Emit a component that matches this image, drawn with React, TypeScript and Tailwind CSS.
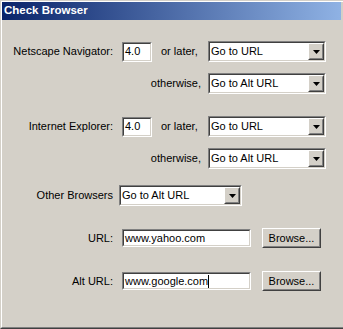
import React from "react";

const font = { fontFamily: '"Liberation Sans", Arial, sans-serif' };

function Sunken({ className = "", children }: { className?: string; children?: React.ReactNode }) {
  return (
    <div className={`border border-t-[#808080] border-l-[#808080] border-b-white border-r-white ${className}`}>
      <div className="w-full h-full border border-t-[#404040] border-l-[#404040] border-b-[#d4d0c8] border-r-[#d4d0c8] bg-white flex items-center">
        {children}
      </div>
    </div>
  );
}

function Raised({ className = "", children }: { className?: string; children?: React.ReactNode }) {
  return (
    <div className={`border border-t-white border-l-white border-b-[#404040] border-r-[#404040] ${className}`}>
      <div className="w-full h-full border border-t-[#d4d0c8] border-l-[#d4d0c8] border-b-[#808080] border-r-[#808080] bg-[#d4d0c8] flex items-center justify-center">
        {children}
      </div>
    </div>
  );
}

function Select({ value, className = "" }: { value: string; className?: string }) {
  return (
    <Sunken className={`h-[21px] ${className}`}>
      <span className="flex-1 pl-[1px] text-[11px] leading-none text-black whitespace-nowrap overflow-hidden">{value}</span>
      <Raised className="w-[16px] h-[17px] shrink-0">
        <svg width="7" height="4" viewBox="0 0 7 4">
          <path d="M0 0H7L3.5 4Z" fill="#000" />
        </svg>
      </Raised>
    </Sunken>
  );
}

function TextBox({ value, className = "", cursor = false }: { value: string; className?: string; cursor?: boolean }) {
  return (
    <Sunken className={className}>
      <span className="pl-[1px] text-[11px] leading-none text-black whitespace-nowrap flex items-center">
        {value}
        {cursor && <span className="inline-block w-[1px] h-[13px] bg-black" />}
      </span>
    </Sunken>
  );
}

function Label({ text, w }: { text: string; w: string }) {
  return <div className={`${w} text-right text-[11px] leading-none text-black whitespace-nowrap shrink-0`}>{text}</div>;
}

export default function App() {
  return (
    <div className="w-[343px] h-[329px] bg-[#d4d0c8] overflow-hidden" style={font}>
      <div className="w-full h-full border-t border-l border-t-[#d4d0c8] border-l-[#d4d0c8] border-b border-b-[#404040]">
        <div className="w-full h-full border-t border-l border-t-white border-l-white border-b border-b-[#808080] flex flex-col">
          <div className="h-[18px] mr-[2px] flex items-center pl-[2px] bg-[linear-gradient(to_right,#0a246a,#8fb2e4)]">
            <span className="text-white font-bold text-[11.5px] leading-none">Check Browser</span>
          </div>

          <div className="flex flex-col">
            <div className="mt-[21px] h-[21px] flex items-center">
              <Label text="Netscape Navigator:" w="w-[111px]" />
              <TextBox value="4.0" className="ml-[9px] w-[30px] h-[20px]" />
              <div className="ml-[9px] w-[47px] text-[11px] leading-none text-black">or later,</div>
              <Select value="Go to URL" className="w-[118px]" />
            </div>
            <div className="mt-[11px] h-[21px] flex items-center">
              <Label text="otherwise," w="w-[199px]" />
              <Select value="Go to Alt URL" className="ml-[7px] w-[118px]" />
            </div>

            <div className="mt-[22px] h-[21px] flex items-center">
              <Label text="Internet Explorer:" w="w-[111px]" />
              <TextBox value="4.0" className="ml-[9px] w-[30px] h-[20px]" />
              <div className="ml-[9px] w-[47px] text-[11px] leading-none text-black">or later,</div>
              <Select value="Go to URL" className="w-[118px]" />
            </div>
            <div className="mt-[11px] h-[21px] flex items-center">
              <Label text="otherwise," w="w-[199px]" />
              <Select value="Go to Alt URL" className="ml-[7px] w-[118px]" />
            </div>

            <div className="mt-[16px] h-[21px] flex items-center">
              <Label text="Other Browsers" w="w-[111px]" />
              <Select value="Go to Alt URL" className="ml-[6px] w-[123px]" />
            </div>

            <div className="mt-[22px] h-[20px] flex items-center">
              <Label text="URL:" w="w-[111px]" />
              <TextBox value="www.yahoo.com" className="ml-[9px] w-[129px] h-[18px]" />
              <Raised className="ml-[11px] w-[59px] h-[20px]">
                <span className="text-[11px] leading-none text-black">Browse...</span>
              </Raised>
            </div>

            <div className="mt-[23px] h-[20px] flex items-center">
              <Label text="Alt URL:" w="w-[111px]" />
              <TextBox value="www.google.com" cursor className="ml-[9px] w-[129px] h-[18px]" />
              <Raised className="ml-[11px] w-[59px] h-[20px]">
                <span className="text-[11px] leading-none text-black">Browse...</span>
              </Raised>
            </div>
          </div>
        </div>
      </div>
    </div>
  );
}
